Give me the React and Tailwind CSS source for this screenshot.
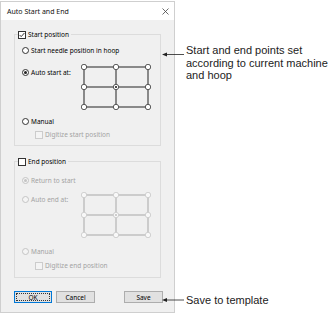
import React from "react";

const ui = { fontFamily: '"Noto Sans", "Open Sans", sans-serif' };
const note = { fontFamily: '"Liberation Sans", Arial, sans-serif' };

const Radio = ({ checked, disabled }) => (
  <span
    className={`w-[7px] h-[7px] rounded-full border flex items-center justify-center shrink-0 ${
      disabled ? "border-[#c4c4c4] bg-[#f4f4f4]" : "border-[#333] bg-white"
    }`}
  >
    {checked && (
      <span
        className={`w-[3px] h-[3px] rounded-full ${
          disabled ? "bg-[#c4c4c4]" : "bg-[#222]"
        }`}
      />
    )}
  </span>
);

const Check = ({ checked, disabled }) => (
  <span
    className={`w-[8px] h-[8px] border flex items-center justify-center shrink-0 ${
      disabled ? "border-[#cccccc] bg-[#f4f4f4]" : "border-[#333] bg-white"
    }`}
  >
    {checked && (
      <svg width="6" height="6" viewBox="0 0 6 6">
        <polyline
          points="0.6,3 2.2,4.6 5.4,1"
          fill="none"
          stroke="#222"
          strokeWidth="0.9"
        />
      </svg>
    )}
  </span>
);

const RadioRow = ({ label, checked, disabled, className = "" }) => (
  <div className={`flex items-center gap-[2px] h-[9px] ${className}`}>
    <Radio checked={checked} disabled={disabled} />
    <span className={disabled ? "text-[#a3a3a3]" : "text-black"}>{label}</span>
  </div>
);

const CheckRow = ({ label, checked, disabled, className = "" }) => (
  <div className={`flex items-center gap-[2px] h-[9px] ${className}`}>
    <Check checked={checked} disabled={disabled} />
    <span className={disabled ? "text-[#a3a3a3]" : "text-black"}>{label}</span>
  </div>
);

// 3x3 grid of hoop points
const PointGrid = ({ disabled }) => {
  const line = disabled ? "#a8a8a8" : "#222";
  const ring = disabled ? "#c8c8c8" : "#333";
  const xs = [3, 35, 67];
  const ys = [3, 23, 43];
  return (
    <svg width="70" height="46" viewBox="0 0 70 46" className="shrink-0">
      {ys.map((y) => (
        <line key={"h" + y} x1="3" y1={y} x2="67" y2={y} stroke={line} strokeWidth="1" />
      ))}
      {xs.map((x) => (
        <line key={"v" + x} x1={x} y1="3" x2={x} y2="43" stroke={line} strokeWidth="1" />
      ))}
      {ys.map((y) =>
        xs.map((x) => (
          <circle
            key={x + "-" + y}
            cx={x}
            cy={y}
            r="2.7"
            fill={disabled ? "#f8f8f8" : "#fff"}
            stroke={ring}
            strokeWidth="0.8"
          />
        ))
      )}
      <circle cx="35" cy="23" r="1.1" fill={disabled ? "#c4c4c4" : "#222"} />
    </svg>
  );
};

const Button = ({ children, primary }) => (
  <div
    className={`h-[12px] flex items-center justify-center bg-[#e1e1e1] border ${
      primary ? "border-[#0078d7] p-[1px]" : "border-[#adadad]"
    }`}
  >
    {primary ? (
      <div className="w-full h-full border border-dotted border-[#333] flex items-center justify-center">
        {children}
      </div>
    ) : (
      children
    )}
  </div>
);

export default function App() {
  return (
    <div className="relative w-[332px] h-[316px] bg-white overflow-hidden">
      <div
        className="w-[175px] h-[312px] mt-[1px] border border-[#cfcfcf] bg-[#f0f0f0] flex flex-col text-[6.5px] leading-[9px]"
        style={ui}
      >
        <div className="h-[18px] bg-white flex items-center justify-between pl-[6px] pr-[5px] text-[7px]">
          <span className="text-[#111]">Auto Start and End</span>
          <svg width="7" height="7" viewBox="0 0 7 7">
            <path d="M0.5 0.5 L6.5 6.5 M6.5 0.5 L0.5 6.5" stroke="#444" strokeWidth="0.8" />
          </svg>
        </div>

        <div className="flex flex-col px-[13px] pt-[10px]">
          <fieldset className="border border-[#dcdcdc] w-[147px] px-[7px] pb-[6px]">
            <legend className="-ml-[4px] pr-[2px]">
              <CheckRow label="Start position" checked />
            </legend>
            <RadioRow label="Start needle position in hoop" className="mt-[7px]" />
            <div className="flex mt-[9px]">
              <RadioRow label="Auto start at:" checked className="w-[59px] mt-[4px] items-center self-start" />
              <PointGrid />
            </div>
            <RadioRow label="Manual" className="mt-[7px]" />
            <CheckRow label="Digitize start position" disabled className="mt-[4px] ml-[13px]" />
          </fieldset>

          <fieldset className="border border-[#dcdcdc] w-[147px] px-[7px] pb-[7px] mt-[11px]">
            <legend className="-ml-[4px] pr-[2px]">
              <CheckRow label="End position" />
            </legend>
            <RadioRow label="Return to start" checked disabled className="mt-[10px]" />
            <div className="flex mt-[7px]">
              <RadioRow label="Auto end at:" disabled className="w-[59px] mt-[3px] self-start" />
              <PointGrid disabled />
            </div>
            <RadioRow label="Manual" disabled className="mt-[9px]" />
            <CheckRow label="Digitize end position" disabled className="mt-[5px] ml-[13px]" />
          </fieldset>

          <div className="flex mt-[13px]">
            <div className="w-[38px]">
              <Button primary>OK</Button>
            </div>
            <div className="w-[39px] ml-[4px]">
              <Button>Cancel</Button>
            </div>
            <div className="w-[39px] ml-auto mr-[-2px]">
              <Button>Save</Button>
            </div>
          </div>
        </div>
      </div>

      {/* callouts */}
      <div className="absolute left-[162px] top-[44px] flex items-start" style={note}>
        <svg width="23" height="20" viewBox="0 0 23 20" className="mt-[0px]">
          <line x1="3" y1="10.5" x2="22" y2="10.5" stroke="#222" strokeWidth="0.8" />
          <polygon points="0,10.5 5,8.5 5,12.5" fill="#222" />
        </svg>
        <div className="ml-[1px] text-[11px] leading-[12.5px] text-[#222]">
          Start and end points set
          <br />
          according to current machine
          <br />
          and hoop
        </div>
      </div>

      <div className="absolute left-[162px] top-[292px] flex items-center" style={note}>
        <svg width="23" height="16" viewBox="0 0 23 16">
          <line x1="3" y1="8" x2="22" y2="8" stroke="#222" strokeWidth="0.8" />
          <polygon points="0,8 5,6 5,10" fill="#222" />
        </svg>
        <div className="ml-[1px] text-[11px] leading-[12.5px] text-[#222]">
          Save to template
        </div>
      </div>
    </div>
  );
}
